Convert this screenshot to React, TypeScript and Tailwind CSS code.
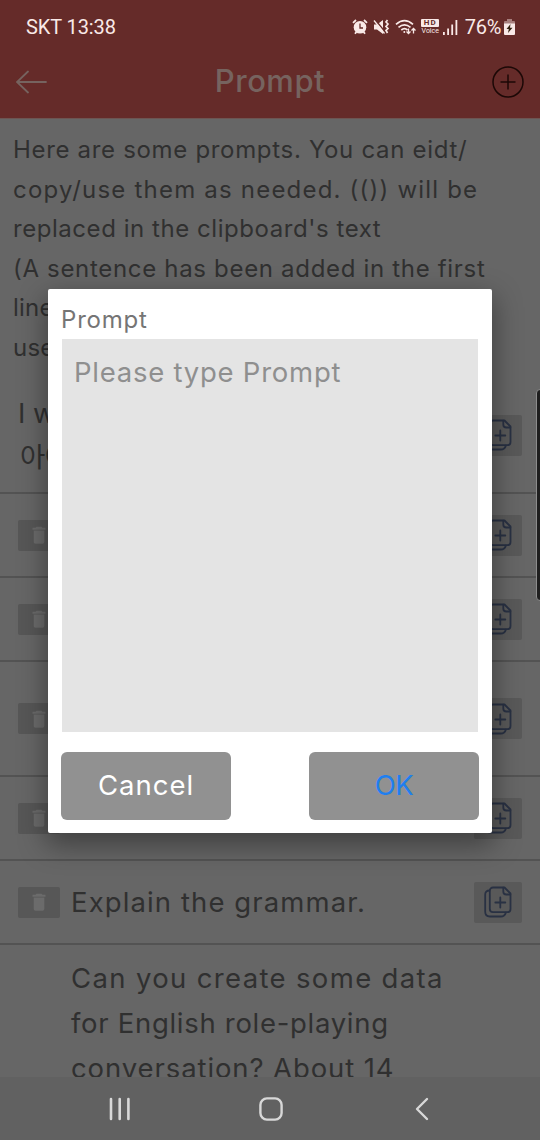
import type { ReactNode } from "react";

const introLines = [
  { text: "Here are some prompts. You can eidt/", track: "tracking-[0.68px]" },
  { text: "copy/use them as needed. (()) will be", track: "tracking-[1.2px]" },
  { text: "replaced in the clipboard's text", track: "tracking-[0.55px]" },
  { text: "(A sentence has been added in the first", track: "tracking-[0.68px]" },
  { text: "line", track: "tracking-[0.2px]" },
  { text: "use", track: "tracking-[0.2px]" },
];

function TrashButton() {
  return (
    <button className="flex h-[31px] w-[42px] shrink-0 items-center justify-center rounded-xs bg-[#575757]">
      <svg width="14" height="18" viewBox="0 0 14 18" fill="#6b6b6b">
        <path d="M4.500.8h5l1 1H13.500v2H.5v-2h3zM1.700 4.500h10.600V16a1.800 1.800 0 0 1-1.800 1.800h-7A1.800 1.800 0 0 1 1.700 16z" />
      </svg>
    </button>
  );
}

function CopyButton() {
  return (
    <button className="flex h-[41px] w-12 shrink-0 items-center justify-center rounded-xs bg-[#595959]">
      <svg width="28" height="32" viewBox="0 0 28 32" fill="none" stroke="#293143" strokeWidth="1.8" strokeLinecap="round" strokeLinejoin="round">
        <path d="M9 1.5h11.5l6 6V23a3.2 3.2 0 0 1-3.2 3.2H9A3.2 3.2 0 0 1 5.8 23V4.7A3.2 3.2 0 0 1 9 1.5z" />
        <path d="M19.3 1.7v3.8a3 3 0 0 0 3 3h4" />
        <path d="M5.5 4.5C2.5 4.5 1.2 6 1.2 8.5v17.3c0 3 1.6 4.7 4.6 4.7h11c2.4 0 4.2-.8 5-3.8" />
        <path d="M16.3 11.5v10M11.3 16.5h10" />
      </svg>
    </button>
  );
}

function Row({ height, trash = true, children }: { height: string; trash?: boolean; children?: ReactNode }) {
  return (
    <div className={`flex shrink-0 items-center border-b-2 border-[#535353] pr-[18px] pl-[18px] ${height}`}>
      {trash && <TrashButton />}
      <div className="flex-1 text-[27.5px] leading-[44px] whitespace-nowrap">{children}</div>
      <CopyButton />
    </div>
  );
}

function StatusBar() {
  return (
    <div className="flex h-[54px] items-center justify-between pr-[25px] pl-[26px] font-['Roboto',sans-serif] text-[20px] text-[#f9e9e7]">
      <span className="tracking-[-0.1px]">SKT 13:38</span>
      <div className="flex items-center">
        <svg width="16" height="16" viewBox="0 0 16 16" fill="none">
          <circle cx="8" cy="8.2" r="6.3" fill="#f9e9e7" />
          <path d="M1 3.8 4 1M15 3.8 12 1M3 14.8l1.5-2M13 14.8l-1.5-2" stroke="#f9e9e7" strokeWidth="1.8" />
          <path d="M8 4.5V9h3" stroke="#652b29" strokeWidth="1.3" />
        </svg>
        <svg className="ml-[5px]" width="17" height="16" viewBox="0 0 17 16" fill="none" stroke="#f9e9e7">
          <path d="M1 5.500h3L10 1v14l-6-4.500H1z" fill="#f9e9e7" stroke="none" />
          <path d="M2 .5 12.500 13.500" stroke="#652b29" strokeWidth="1.500" />
          <path d="M1 1.500 11.500 14.500" strokeWidth="1.300" />
          <path d="m14.500 1-1.500 2 2 2-2 2.500 2 2-2 2 1.500 2.500" strokeWidth="1.700" />
        </svg>
        <svg className="ml-[5px]" width="21" height="16" viewBox="0 0 21 16" fill="none" stroke="#f9e9e7" strokeWidth="1.7">
          <path d="M1 5.300Q9.500-2 18 5.300M3.500 8.300q6-5 12 0M6.300 11q3.200-2.600 6.200 0" />
          <circle cx="9.300" cy="13" r="1" fill="#f9e9e7" stroke="none" />
          <path d="M13.500 9.500v5m-2-2 2 2 2-2M18.500 14.500v-5m-2 2 2-2 2 2" strokeWidth="1.300" />
        </svg>
        <div className="ml-[5px] flex w-[19px] flex-col items-center">
          <span className="flex h-[8px] w-[18px] items-center justify-center rounded-[1px] bg-[#f9e9e7] text-[8px] leading-none font-bold tracking-[1px] text-[#652b29]">HD</span>
          <span className="text-[7px] leading-[8px]">Voice</span>
        </div>
        <svg className="ml-[3px]" width="15" height="15" viewBox="0 0 15 15" fill="#f9e9e7">
          <path d="M0 12h1.800v3H0zM4.200 8.500H6V15H4.200zM8.300 4.500h1.800V15H8.300zM12.500 0h1.800v15h-1.800z" />
        </svg>
        <span className="ml-[7px] tracking-[-0.3px]">76%</span>
        <svg className="ml-[3px]" width="11" height="16" viewBox="0 0 11 16">
          <path d="M3 0h5v2h2a1 1 0 0 1 1 1v2H0V3a1 1 0 0 1 1-1h2z" fill="#a77f7d" />
          <path d="M0 4.500h11V15a1 1 0 0 1-1 1H1a1 1 0 0 1-1-1z" fill="#f9e9e7" />
          <path d="M6.500 5 2.500 10h2.300l-.8 4 4.500-5.300H6z" fill="#321" />
        </svg>
      </div>
    </div>
  );
}

function PromptDialog() {
  return (
    <div className="absolute top-[289px] left-12 flex h-[544px] w-[444px] flex-col rounded-[2px] bg-white px-[13px] pt-[9px] pb-[12px] shadow-[0_10px_28px_2px_rgba(0,0,0,0.38)]">
      <h2 className="h-[41px] text-[24px] leading-[43px] tracking-[0.8px] text-[#757575]">Prompt</h2>
      <div className="mx-px h-[393px] bg-[#e4e4e4] px-3 pt-[11px] text-[27.5px] leading-[44px] tracking-[0.75px] whitespace-nowrap text-[#8f8f8f]">
        Please type Prompt
      </div>
      <div className="mt-5 flex h-[68px] justify-between text-[27.5px]">
        <button className="w-[170px] rounded-[6px] bg-[#919191] tracking-[1px] text-white">Cancel</button>
        <button className="w-[170px] rounded-[6px] bg-[#919191] tracking-[-0.5px] text-[#1f7ff0]">OK</button>
      </div>
    </div>
  );
}

export default function App() {
  return (
    <main className="relative flex h-[1140px] w-[540px] flex-col overflow-hidden bg-[#666666] font-['Inter','Noto_Sans_CJK_KR',sans-serif] font-normal text-[#303030]">
      <header className="h-[119px] shrink-0 border-b border-[#6d5552] bg-[#652b29]">
        <StatusBar />
        <div className="flex h-[54px] items-center justify-between px-4">
          <svg className="mt-px" width="32" height="24" viewBox="0 0 32 24" fill="none" stroke="#76635f" strokeWidth="1.800" strokeLinecap="round">
            <path d="M1 12h29M12 1.500 1 12l11 10.500" />
          </svg>
          <h1 className="text-[31px] font-medium tracking-[0.5px] text-[#76635f]">Prompt</h1>
          <svg className="mt-px" width="32" height="32" viewBox="0 0 32 32" fill="none" stroke="#1c0806" strokeWidth="1.500">
            <circle cx="16" cy="16" r="15" />
            <path d="M16 8.500v15M8.500 16h15" />
          </svg>
        </div>
      </header>

      {/* List content */}
      <div className="flex min-h-0 flex-1 flex-col overflow-hidden">
        <div className="h-[259px] shrink-0 pt-[11px] pl-[13px] text-[24px]">
          {introLines.map((line) => (
            <p key={line.text} className={`h-[39.5px] leading-[39.5px] whitespace-nowrap ${line.track}`}>
              {line.text}
            </p>
          ))}
        </div>
        <Row height="h-[116px]" trash={false}>
          <p>I w</p>
          <p className="pl-[2px] tracking-[-1px]">아이</p>
        </Row>
        <Row height="h-[84px]" />
        <Row height="h-[84px]" />
        <Row height="h-[115px]" />
        <Row height="h-[84px]" />
        <Row height="h-[84px]">
          <p className="pl-[11px] tracking-[1.1px]">Explain the grammar.</p>
        </Row>
        <div className="shrink-0 pt-[11px] pl-[71px] text-[27.5px] leading-[45px] whitespace-nowrap">
          <p className="tracking-[1.35px]">Can you create some data</p>
          <p className="tracking-[0.7px]">for English role-playing</p>
          <p className="tracking-[0.9px]">conversation? About 14</p>
        </div>
      </div>

      {/* System navigation */}
      <nav className="flex h-[63px] shrink-0 items-center bg-[#616161] pl-[109px]">
        <svg width="22" height="24" viewBox="0 0 22 24" stroke="#d8d8d8" strokeWidth="2.600" strokeLinecap="round">
          <path d="M2 2v20M10.700 2v20M19.400 2v20" />
        </svg>
        <svg className="ml-[128px]" width="24" height="24" viewBox="0 0 24 24" fill="none" stroke="#d8d8d8" strokeWidth="2.400">
          <rect x="1.400" y="1.400" width="21.200" height="21.200" rx="6.500" />
        </svg>
        <svg className="ml-[131px]" width="16" height="24" viewBox="0 0 16 24" fill="none" stroke="#d8d8d8" strokeWidth="2.400" strokeLinecap="round" strokeLinejoin="round">
          <path d="M13 2 3 12l10 10" />
        </svg>
      </nav>

      <PromptDialog />
      <div className="absolute top-[389px] right-[-4px] h-[212px] w-[8px] rounded-[4px] border border-[#8d8d8d] bg-[#1f1f1f]" />
    </main>
  );
}
